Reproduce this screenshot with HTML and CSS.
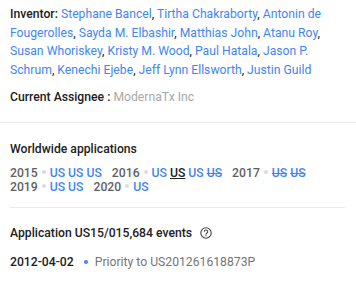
FILE: index.html
```html
<!DOCTYPE html>
<html>
<head>
<meta charset="utf-8">
<link rel="stylesheet" href="styles.css">
</head>
<body>
<div class="page">
  <section class="people">
    <p class="inventors"><span class="label">Inventor:</span> <a>Stephane Bancel</a>, <a>Tirtha Chakraborty</a>, <a>Antonin de Fougerolles</a>, <a>Sayda M. Elbashir</a>, <a>Matthias John</a>, <a>Atanu Roy</a>, <a>Susan Whoriskey</a>, <a>Kristy M. Wood</a>, <a>Paul Hatala</a>, <a>Jason P. Schrum</a>, <a>Kenechi Ejebe</a>, <a>Jeff Lynn Ellsworth</a>, <a>Justin Guild</a></p>
    <p class="assignee"><span class="label">Current Assignee :</span> <span class="muted">ModernaTx Inc</span></p>
  </section>
  <hr class="rule full">
  <section class="worldwide">
    <h3 class="heading">Worldwide applications</h3>
    <div class="years">
      <span class="yr">2015</span><span class="dot"></span><a>US</a> <a>US</a> <a>US</a><span class="gap"></span><span class="yr">2016</span><span class="dot"></span><a>US</a> <span class="cur">US</span> <a>US</a> <a class="dead">US</a><span class="gap"></span><span class="yr">2017</span><span class="dot"></span><a class="dead">US</a> <a class="dead">US</a><br>
      <span class="yr">2019</span><span class="dot"></span><a>US</a> <a>US</a><span class="gap"></span><span class="yr">2020</span><span class="dot"></span><a>US</a>
    </div>
  </section>
  <hr class="rule inset">
  <section class="events">
    <h3 class="heading">Application US15/015,684 events
      <svg class="help" width="12" height="12" viewBox="0 0 12 12"><circle cx="6" cy="6" r="5.2" fill="none" stroke="#424242" stroke-width="1.1"/><path d="M4.3 4.7a1.7 1.7 0 1 1 2.4 1.5c-0.5 0.3-0.7 0.6-0.7 1.2" fill="none" stroke="#424242" stroke-width="1.1"/><rect x="5.45" y="8.1" width="1.1" height="1.1" fill="#424242"/></svg>
    </h3>
    <div class="event"><span class="date">2012-04-02</span><span class="bdot"></span><span class="desc">Priority to US201261618873P</span></div>
  </section>
</div>
</body>
</html>
```

FILE: styles.css
```css
html, body {
  margin: 0;
  padding: 0;
  background: #fff;
}
body {
  font-family: Roboto, "Liberation Sans", Arial, sans-serif;
  font-size: 12.2px;
  color: #212121;
}
.page {
  width: 356px;
}
.people {
  padding: 5px 10px 0 10px;
}
.inventors {
  margin: 0;
  line-height: 18.7px;
}
.label {
  font-weight: 500;
  color: #212121;
}
a {
  color: #4285f4;
  text-decoration: none;
}
.assignee {
  margin: 8px 0 0 0;
  line-height: 18.7px;
}
.muted {
  color: #a8a8a8;
}
.rule {
  border: 0;
  height: 1px;
  background: #ebebeb;
  margin: 0;
}
.rule.full {
  margin-top: 15px;
}
.rule.inset {
  margin: 13px 11px 0 10px;
}
.worldwide {
  padding: 0 10px;
}
.heading {
  margin: 0;
  font-size: 12.2px;
  font-weight: 500;
  color: #212121;
  line-height: 18px;
  display: flex;
  align-items: center;
}
.worldwide .heading {
  margin-top: 17px;
}
.years {
  margin-top: 8px;
  line-height: 14px;
  font-weight: 500;
  font-size: 12.2px;
}
.yr {
  color: #616161;
}
.dot {
  display: inline-block;
  width: 4px;
  height: 4px;
  border-radius: 50%;
  background: #dcdcdc;
  margin: 0 4px;
  vertical-align: 3px;
}
.gap {
  display: inline-block;
  width: 10px;
}
.cur {
  color: #212121;
  text-decoration: underline;
}
.dead {
  text-decoration: line-through;
}
.events {
  padding: 0 10px;
}
.events .heading {
  margin-top: 16px;
}
.help {
  margin-left: 8px;
}
.event {
  margin-top: 11px;
  display: flex;
  align-items: center;
  line-height: 18px;
}
.date {
  font-weight: 500;
  color: #212121;
}
.bdot {
  width: 4px;
  height: 4px;
  border-radius: 50%;
  background: #4285f4;
  margin: 0 7px 0 10px;
}
.desc {
  color: #757575;
}
```
